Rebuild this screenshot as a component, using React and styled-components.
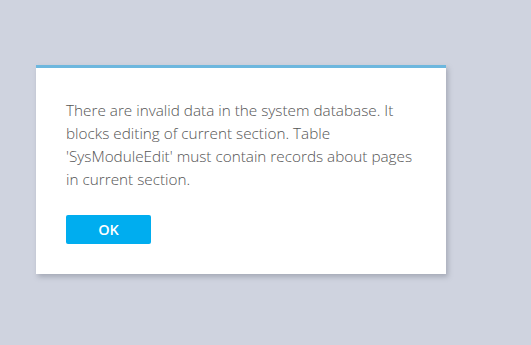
import React from "react";
import styled, { createGlobalStyle } from "styled-components";

const GlobalStyle = createGlobalStyle`
  html, body {
    margin: 0;
    padding: 0;
    background: #cfd3df;
  }
  body {
    font-family: "Open Sans", "Liberation Sans", sans-serif;
  }
`;

const Page = styled.div`
  width: 531px;
  height: 345px;
  padding: 65px 0 0 36px;
  box-sizing: border-box;
`;

const Dialog = styled.div`
  width: 410px;
  height: 209px;
  box-sizing: border-box;
  background: #fff;
  border-top: 3px solid #6db7de;
  box-shadow: 2px 3px 5px rgba(90, 95, 110, 0.35);
  padding: 31px 30px 0 30px;
  display: flex;
  flex-direction: column;
  align-items: flex-start;
`;

const Message = styled.p`
  margin: 0;
  font-size: 15.3px;
  line-height: 23px;
  font-weight: 300;
  color: #555;
`;

const Button = styled.button`
  margin-top: 24px;
  width: 85px;
  height: 29px;
  border: none;
  border-radius: 2px;
  background: #00adef;
  color: #fff;
  font-family: "Open Sans", "Liberation Sans", sans-serif;
  font-size: 14.5px;
  font-weight: 600;
  cursor: pointer;
`;

export default function App() {
  return (
    <>
      <GlobalStyle />
      <Page>
        <Dialog>
          <Message>
            There are invalid data in the system database. It blocks editing
            of current section. Table 'SysModuleEdit' must contain records
            about pages in current section.
          </Message>
          <Button>OK</Button>
        </Dialog>
      </Page>
    </>
  );
}
